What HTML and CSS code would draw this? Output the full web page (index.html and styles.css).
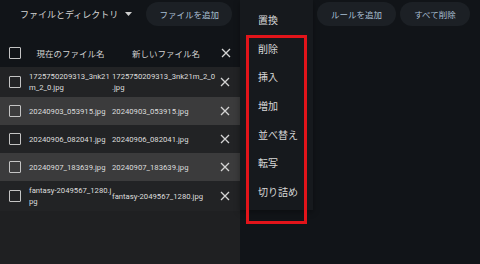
FILE: index.html
```html
<!DOCTYPE html>
<html lang="ja">
<head>
    <meta charset="UTF-8">
    <title>ファイル名変更</title>
    <link rel="stylesheet" href="styles.css">
</head>
<body>
<div class="app">
    <section class="pane files">
        <div class="toolbar">
            <button class="dropdown">ファイルとディレクトリ
                <svg class="caret" width="7" height="4" viewBox="0 0 7 4"><path d="M0 0h7L3.5 4z" fill="#cfcfcf"/></svg>
            </button>
            <button class="pill">ファイルを追加</button>
        </div>
        <table class="file-table">
            <colgroup>
                <col class="c-check">
                <col class="c-old">
                <col class="c-new">
                <col class="c-del">
            </colgroup>
            <thead>
            <tr>
                <th><span class="box"></span></th>
                <th>現在のファイル名</th>
                <th>新しいファイル名</th>
                <th><svg class="x" viewBox="0 0 10 10"><path d="M1 1l8 8M9 1l-8 8"/></svg></th>
            </tr>
            </thead>
            <tbody>
            <tr>
                <td><span class="box"></span></td>
                <td>1725750209313_3nk21m_2_0.jpg</td>
                <td class="new">1725750209313_3nk21m_2_0<wbr>.jpg</td>
                <td><svg class="x" viewBox="0 0 10 10"><path d="M1 1l8 8M9 1l-8 8"/></svg></td>
            </tr>
            <tr>
                <td><span class="box"></span></td>
                <td>20240903_053915.jpg</td>
                <td class="new">20240903_053915.jpg</td>
                <td><svg class="x" viewBox="0 0 10 10"><path d="M1 1l8 8M9 1l-8 8"/></svg></td>
            </tr>
            <tr>
                <td><span class="box"></span></td>
                <td>20240906_082041.jpg</td>
                <td class="new">20240906_082041.jpg</td>
                <td><svg class="x" viewBox="0 0 10 10"><path d="M1 1l8 8M9 1l-8 8"/></svg></td>
            </tr>
            <tr>
                <td><span class="box"></span></td>
                <td>20240907_183639.jpg</td>
                <td class="new">20240907_183639.jpg</td>
                <td><svg class="x" viewBox="0 0 10 10"><path d="M1 1l8 8M9 1l-8 8"/></svg></td>
            </tr>
            <tr>
                <td><span class="box"></span></td>
                <td>fantasy-2049567_1280.jpg</td>
                <td class="new">fantasy-2049567_1280.jpg</td>
                <td><svg class="x" viewBox="0 0 10 10"><path d="M1 1l8 8M9 1l-8 8"/></svg></td>
            </tr>
            </tbody>
        </table>
    </section>

    <section class="pane rules">
        <div class="toolbar right">
            <button class="pill">ルールを追加</button>
            <button class="pill">すべて削除</button>
        </div>
        <ul class="menu">
            <li>置換</li>
            <li>削除</li>
            <li>挿入</li>
            <li>増加</li>
            <li>並べ替え</li>
            <li>転写</li>
            <li>切り詰め</li>
        </ul>
        <div class="mark"></div>
    </section>
</div>
</body>
</html>
```

FILE: styles.css
```css
* {
    box-sizing: border-box;
}

body {
    margin: 0;
    background-color: #111418;
    font-family: Roboto, "Noto Sans CJK JP", sans-serif;
    color: #dcdcdc;
}

.app {
    display: flex;
    width: 480px;
    height: 264px;
    overflow: hidden;
}

.pane {
    width: 240px;
    height: 264px;
    flex-shrink: 0;
    position: relative;
}

.files {
    background-color: #1f2022;
}

.files .toolbar {
    background-color: #111418;
}

.toolbar {
    display: flex;
    align-items: center;
    height: 28px;
    padding: 2px 7px 2px 20px;
    gap: 14px;
}

.toolbar.right {
    justify-content: flex-end;
    gap: 4px;
    padding: 2px 10px 2px 0;
}

button {
    font-family: inherit;
    border: none;
    white-space: nowrap;
    flex-shrink: 0;
    cursor: pointer;
}

.dropdown {
    background: none;
    color: #d6d6d6;
    font-size: 9px;
    padding: 0;
    display: flex;
    align-items: center;
    gap: 7px;
}

.pill {
    height: 24px;
    border-radius: 12px;
    background-color: #1c2025;
    color: #a9bfd4;
    font-size: 8.5px;
    padding: 0 12px;
}

.files .pill {
    width: 86px;
}

.toolbar.right .pill:first-child {
    width: 79px;
}

.toolbar.right .pill:last-child {
    width: 70px;
}

.file-table {
    width: 240px;
    border-collapse: collapse;
    table-layout: fixed;
}

.file-table thead tr {
    background-color: #111418;
}

.c-check {
    width: 29px;
}

.c-old {
    width: 83px;
}

.c-new {
    width: 108px;
}

.c-del {
    width: 20px;
}

th {
    height: 39px;
    padding-top: 12px;
    font-size: 8.5px;
    font-weight: normal;
    color: #d2d2d2;
    text-align: center;
    vertical-align: middle;
}

td {
    height: 28px;
    padding: 4px 0;
    font-size: 7.7px;
    line-height: 11px;
    vertical-align: middle;
    word-break: break-all;
    color: #dedede;
}

td.new {
    word-break: normal;
    overflow-wrap: anywhere;
}

tbody tr:nth-child(even) {
    background-color: #3b3b3c;
}

tbody tr:nth-child(odd) {
    background-color: #222325;
}

th:first-child, td:first-child {
    padding-left: 9px;
}

.box {
    display: block;
    width: 12px;
    height: 12px;
    border: 1.5px solid #c4c4c4;
    border-radius: 1px;
}

.x {
    display: block;
    width: 10px;
    height: 10px;
    margin-left: 0;
    fill: none;
    stroke: #d4d4d4;
    stroke-width: 1.3;
}

.menu {
    position: absolute;
    left: 0;
    top: 0;
    width: 73px;
    height: 210px;
    margin: 0;
    padding: 7px 0 0 18px;
    list-style: none;
    background-color: #16191d;
    box-shadow: 0 2px 6px rgba(0, 0, 0, 0.35);
}

.menu li {
    height: 28.7px;
    line-height: 28.7px;
    font-size: 10px;
    color: #d8d8d8;
}

.mark {
    position: absolute;
    left: 6px;
    top: 35px;
    width: 61px;
    height: 189px;
    border: 3px solid #e2141a;
}
```
